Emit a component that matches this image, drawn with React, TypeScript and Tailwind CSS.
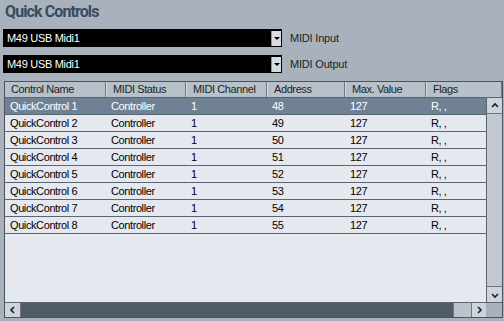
import React from "react";

const rows = [
  ["QuickControl 1", "Controller", "1", "48", "127", "R, ,"],
  ["QuickControl 2", "Controller", "1", "49", "127", "R, ,"],
  ["QuickControl 3", "Controller", "1", "50", "127", "R, ,"],
  ["QuickControl 4", "Controller", "1", "51", "127", "R, ,"],
  ["QuickControl 5", "Controller", "1", "52", "127", "R, ,"],
  ["QuickControl 6", "Controller", "1", "53", "127", "R, ,"],
  ["QuickControl 7", "Controller", "1", "54", "127", "R, ,"],
  ["QuickControl 8", "Controller", "1", "55", "127", "R, ,"],
];

const headers = ["Control Name", "MIDI Status", "MIDI Channel", "Address", "Max. Value", "Flags"];

function Chevron({ dir }: { dir: "up" | "down" | "left" | "right" }) {
  const d = {
    up: "M2 6 L5 3 L8 6",
    down: "M2 4 L5 7 L8 4",
    left: "M6 2 L3 5 L6 8",
    right: "M4 2 L7 5 L4 8",
  }[dir];
  return (
    <svg width="10" height="10" viewBox="0 0 10 10">
      <path d={d} fill="none" stroke="#1a1f26" strokeWidth="1.6" />
    </svg>
  );
}

function Dropdown({ value, label }: { value: string; label: string }) {
  return (
    <div className="flex items-center h-[18px]">
      <div className="flex items-center w-[279px] h-[18px] bg-black pl-[4px] pr-[1px]">
        <span className="flex-1 text-white text-[11px] tracking-[-0.3px]">{value}</span>
        <div className="w-[10px] h-[15px] bg-[#d8dce1] border-l border-[#8d959e] flex items-center justify-center">
          <div className="w-0 h-0 border-l-[3px] border-r-[3px] border-t-[3px] border-l-transparent border-r-transparent border-t-black" />
        </div>
      </div>
      <span className="ml-[8px] text-[11px] tracking-[-0.2px] text-[#1a1f26]">{label}</span>
    </div>
  );
}

export default function App() {
  return (
    <div className="w-[504px] h-[321px] bg-[#a9b2bc] overflow-hidden [font-family:'Liberation_Sans',Arial,sans-serif]">
      <div className="h-[29px] pl-[5px] pt-[2px] text-[16px] tracking-[-0.9px] font-bold text-[#384b5e] leading-[20px] [font-family:Roboto,'Liberation_Sans',sans-serif]">
        Quick Controls
      </div>
      <div className="pl-[3px] flex flex-col gap-[8px]">
        <Dropdown value="M49 USB Midi1" label="MIDI Input" />
        <Dropdown value="M49 USB Midi1" label="MIDI Output" />
      </div>

      <div className="mt-[8px] ml-[4px] w-[499px] h-[237px] border border-[#4a5360] flex flex-col bg-[#e6e8f0] text-[11px] tracking-[-0.4px]">
        <div className="grid grid-cols-[101px_80px_81px_78px_81px_1fr] h-[16px] bg-[#b8c0c9] border-b border-[#5b6570] text-[#1a1f26]">
          {headers.map((h, i) => (
            <div
              key={h}
              className={`pl-[6px] leading-[15px] border-r border-[#6f7882] ${i === 0 ? "" : "border-l border-l-[#d6dbe0]"}`}
            >
              {h}
            </div>
          ))}
        </div>

        <div className="flex flex-1 min-h-0">
          <div className="flex-1">
            {rows.map((r, ri) => (
              <div
                key={ri}
                className={`grid grid-cols-[101px_80px_81px_78px_81px_1fr] h-[17px] border-b border-[#5b6570] ${
                  ri === 0 ? "bg-[#6f8195] text-white" : "text-black"
                }`}
              >
                {r.map((c, ci) => (
                  <div key={ci} className="pl-[5px] leading-[16px] whitespace-nowrap overflow-hidden">
                    {c}
                  </div>
                ))}
              </div>
            ))}
          </div>
          <div className="w-[16px] flex flex-col bg-[#c3c9cf] border-l border-[#5b6570]">
            <div className="h-[16px] bg-[#cfd4da] border-b border-[#6f7882] flex items-center justify-center">
              <Chevron dir="up" />
            </div>
            <div className="flex-1" />
            <div className="h-[16px] bg-[#cfd4da] border-t border-[#6f7882] flex items-center justify-center">
              <Chevron dir="down" />
            </div>
          </div>
        </div>

        <div className="flex h-[15px] border-t border-[#5b6570]">
          <div className="w-[16px] bg-[#cfd4da] border-r border-[#6f7882] flex items-center justify-center">
            <Chevron dir="left" />
          </div>
          <div className="flex-1 bg-[#4f5b67]" />
          <div className="w-[18px] bg-[#bcc3ca] border-l border-[#6f7882]" />
          <div className="w-[15px] bg-[#cfd4da] border-l border-[#6f7882] flex items-center justify-center">
            <Chevron dir="right" />
          </div>
          <div className="w-[16px] bg-[#a9b2bc]" />
        </div>
      </div>
    </div>
  );
}
